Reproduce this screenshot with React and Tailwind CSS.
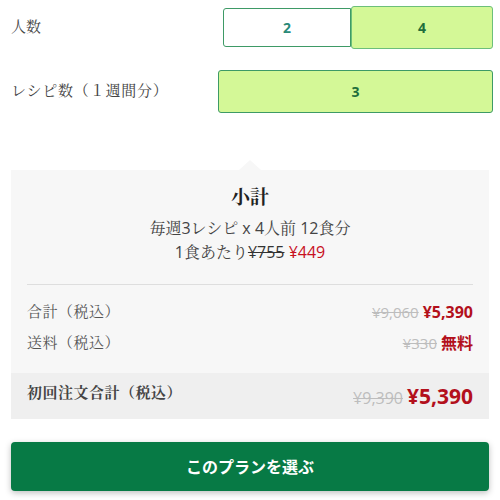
import React from 'react'

const serif = { fontFamily: '"Liberation Serif", "Noto Serif CJK JP", serif' }
const sans = { fontFamily: '"Open Sans", "Noto Sans CJK JP", sans-serif' }
const mixed = { fontFamily: '"Open Sans", "Liberation Serif", "Noto Serif CJK JP", serif' }

function Price({ was, now, big }) {
  return (
    <div className="flex items-baseline gap-1" style={sans}>
      <span className={`line-through text-[#bdbdbd] ${big ? 'text-[16px]' : 'text-[15px]'}`}>{was}</span>
      <span className={`font-bold text-[#b3101c] ${big ? 'text-[21px]' : 'text-[16px]'}`}>{now}</span>
    </div>
  )
}

export default function App() {
  return (
    <div className="w-[500px] h-[500px] bg-white overflow-hidden text-[#444]">
      {/* 人数 */}
      <div className="flex items-center h-[55px] pl-[11px] pr-[7px]">
        <span className="text-[15px] flex-1" style={serif}>人数</span>
        <div className="flex items-center">
          <button className="w-[128px] h-[39px] border border-[#3e9a66] rounded-l-[3px] bg-white text-[#2b8a78] font-bold text-[14px]" style={sans}>2</button>
          <button className="w-[142px] h-[43px] border border-[#6cbf7a] rounded-[3px] bg-[#d4f897] text-[#1f6e3c] font-bold text-[14px]" style={sans}>4</button>
        </div>
      </div>

      {/* レシピ数 */}
      <div className="flex items-center h-[73px] pl-[11px] pr-[7px]">
        <span className="text-[15px] tracking-[0.8px] flex-1" style={serif}>レシピ数（１週間分）</span>
        <button className="w-[275px] h-[43px] border border-[#3e9a66] rounded-[3px] bg-[#d4f897] text-[#1f6e3c] font-bold text-[14px]" style={sans}>3</button>
      </div>

      {/* 小計 card */}
      <div className="relative mx-[11px] mt-[42px] bg-[#f7f7f7]">
        <div className="absolute left-1/2 -top-[10px] -translate-x-1/2 w-0 h-0 border-l-[11px] border-r-[11px] border-b-[10px] border-l-transparent border-r-transparent border-b-[#f7f7f7]" />
        <div className="pt-[14px] pb-[20px] text-center">
          <div className="text-[19px] font-bold text-[#222] leading-[28px]" style={serif}>小計</div>
          <div className="text-[16px] leading-[24px] mt-[4px]" style={mixed}>毎週3レシピ x 4人前 12食分</div>
          <div className="text-[16px] leading-[24px]" style={mixed}>
            1食あたり<span className="line-through text-[#333]">¥755</span> <span className="text-[#c8101e]">¥449</span>
          </div>
        </div>
        <div className="mx-[16px] border-t border-[#dedede]" />
        <div className="px-[16px] pt-[16px] pb-[19px] flex flex-col gap-[9px]">
          <div className="flex items-center justify-between h-[22px]">
            <span className="text-[15px] tracking-[0.5px] text-[#555]" style={serif}>合計（税込）</span>
            <Price was="¥9,060" now="¥5,390" />
          </div>
          <div className="flex items-center justify-between h-[22px]">
            <span className="text-[15px] tracking-[0.5px] text-[#555]" style={serif}>送料（税込）</span>
            <div className="flex items-baseline gap-1" style={sans}>
              <span className="line-through text-[#bdbdbd] text-[15px]">¥330</span>
              <span className="font-bold text-[#b3101c] text-[16px]">無料</span>
            </div>
          </div>
        </div>
        <div className="bg-[#efefef] h-[46px] px-[16px] flex items-start justify-between pt-[8px]">
          <span className="text-[15px] tracking-[0.5px] font-bold text-[#444] leading-[24px]" style={serif}>初回注文合計（税込）</span>
          <Price was="¥9,390" now="¥5,390" big />
        </div>
      </div>

      {/* CTA */}
      <button className="mx-[11px] mt-[23px] w-[478px] h-[49px] rounded-[4px] bg-[#077a45] text-white font-bold text-[16px] shadow-[0_2px_6px_rgba(0,0,0,0.25)]" style={sans}>
        このプランを選ぶ
      </button>
    </div>
  )
}
